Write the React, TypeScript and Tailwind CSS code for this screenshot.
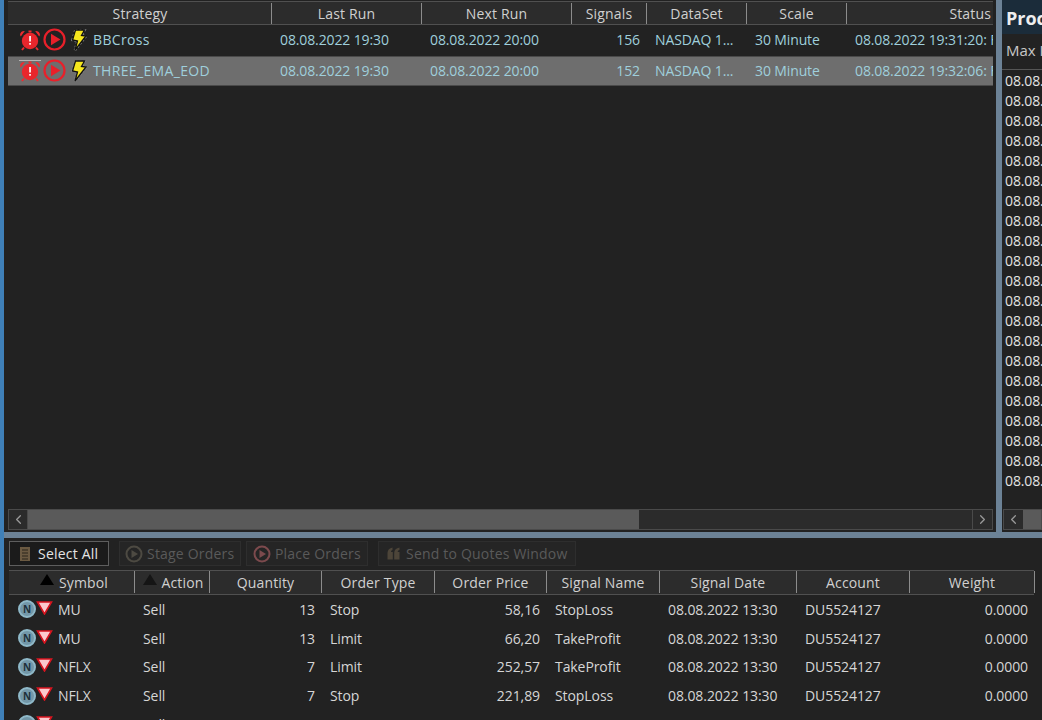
import { ChevronLeft, ChevronRight } from "lucide-react"

const strategies = [
  { name: "BBCross", last: "08.08.2022 19:30", next: "08.08.2022 20:00", signals: "156", status: "08.08.2022 19:31:20: F" },
  { name: "THREE_EMA_EOD", last: "08.08.2022 19:30", next: "08.08.2022 20:00", signals: "152", status: "08.08.2022 19:32:06: F" },
]

const orders = [
  ["MU", "Stop", "13", "58,16", "StopLoss"],
  ["MU", "Limit", "13", "66,20", "TakeProfit"],
  ["NFLX", "Limit", "7", "252,57", "TakeProfit"],
  ["NFLX", "Stop", "7", "221,89", "StopLoss"],
  ["NTES", "Stop", "9", "85,47", "StopLoss"],
]

function Alarm({ line }: { line?: boolean }) {
  return (
    <svg width="22" height="22" viewBox="0 0 22 22" className="shrink-0">
      <path d="M1 6 C1 3.5 3 1.8 5.8 2 L1.8 7.5 Z M21 6 C21 3.5 19 1.8 16.2 2 L20.2 7.5 Z" fill="#ee2a2f" />
      <rect x="9.5" y="1.5" width="3" height="2" fill="#ee2a2f" />
      <circle cx="11" cy="12" r="8.2" fill="#e8262c" />
      <path d="M5 18.5 L3 21 M17 18.5 L19 21" stroke="#ee2a2f" strokeWidth="2" />
      <rect x="10.2" y="7" width="1.7" height="5.5" fill="#fff" />
      <rect x="10.2" y="14" width="1.7" height="1.7" fill="#fff" />
      {line && <path d="M0 0.5 H22" stroke="#b5b5b5" strokeWidth="1" />}
    </svg>
  )
}

function Play() {
  return (
    <svg width="23" height="23" viewBox="0 0 23 23" className="shrink-0">
      <circle cx="11.5" cy="11.5" r="10" fill="none" stroke="#e8202a" strokeWidth="2.2" />
      <path d="M8 5.8 L17.5 11.5 L8 17.2 Z" fill="#e8202a" />
    </svg>
  )
}

function Bolt() {
  return (
    <svg width="16" height="22" viewBox="0 0 16 22" className="shrink-0">
      <path d="M4.5 1 L13.5 1 L10.5 6.5 L15 7 L4 21 L6.5 12 L1.5 11 Z" fill="none" stroke="#8a8a8a" strokeWidth="2.6" strokeDasharray="2 2" />
      <path d="M4.5 1 L13.5 1 L10.5 6.5 L15 7 L4 21 L6.5 12 L1.5 11 Z" fill="#f6e71d" stroke="#111" strokeWidth="1.3" />
    </svg>
  )
}

function SmallPlay({ color }: { color: string }) {
  return (
    <svg width="18" height="18" viewBox="0 0 18 18" className="shrink-0">
      <circle cx="9" cy="9" r="7.5" fill="none" stroke={color} strokeWidth="2" />
      <path d="M6.5 5 L13 9 L6.5 13 Z" fill={color} />
    </svg>
  )
}

function StatusIcons() {
  return (
    <div className="flex w-[40px] shrink-0 items-center">
      <div className="flex h-[18px] w-[18px] shrink-0 items-center justify-center rounded-full border-2 border-[#8fb9c9] bg-[#7397a8] text-[10px] font-bold leading-none text-[#20303a]">
        N
      </div>
      <svg width="17" height="14" viewBox="0 0 17 14" className="mb-[3px] shrink-0">
        <path d="M1.5 1 L15.5 1 L8.5 13 Z" fill="#fbc9cd" stroke="#d8141f" strokeWidth="1.6" />
      </svg>
    </div>
  )
}

function ScrollBar({ thumb, children }: { thumb: string; children?: React.ReactNode }) {
  return (
    <div className="flex h-[21px] shrink-0 border border-[#4a4a4a] bg-[#2b2b2b] text-[#9a9a9a]">
      {children}
      <div className={thumb} />
    </div>
  )
}

function Head({ w, children, sort }: { w: string; children: string; sort?: string }) {
  return (
    <div className={`${w} flex shrink-0 items-center justify-center border-r border-[#8c8c8c]`}>
      {sort && <span className={`mr-[5px] mb-[5px] h-0 w-0 border-x-[7px] border-b-[11px] border-x-transparent ${sort}`} />}
      {children}
    </div>
  )
}

export default function App() {
  return (
    <div className="flex h-[720px] w-[1042px] flex-col overflow-hidden bg-[#222222] pl-[4px] font-['Open_Sans',sans-serif] text-[14px] text-[#d8d8d8] shadow-[inset_4px_0_0_#3f80b8]">
      <div className="flex h-[532px] shrink-0">
        <div className="flex w-[992px] shrink-0 flex-col pl-[4px] pt-[1px]">
          <div className="flex h-[24px] w-[985px] shrink-0 border-y border-[#505050] bg-[#2c2c2c] pt-[1px] tracking-[0.15px] text-[#d0d0d0]">
            <Head w="w-[264px] pl-[1px]">Strategy</Head>
            <Head w="w-[150px]">Last Run</Head>
            <Head w="w-[150px]">Next Run</Head>
            <Head w="w-[75px]">Signals</Head>
            <Head w="w-[100px]">DataSet</Head>
            <Head w="w-[100px]">Scale</Head>
            <div className="flex flex-1 items-center justify-end pr-[2px]">Status</div>
          </div>
          <div className="flex-1">
            {strategies.map((s, i) => (
              <div
                key={s.name}
                className={`flex h-[30px] w-[985px] items-center overflow-hidden whitespace-nowrap pb-[1px] tracking-[-0.12px] text-[#9fcfdc] ${i === 1 ? "mt-[1px] border-y border-[#4a4a4a] bg-[#6e6e6e]" : ""}`}
              >
                <div className="flex w-[264px] shrink-0 items-center pl-[11px]">
                  <Alarm line={i === 1} />
                  <div className="ml-[2px] flex"><Play /></div>
                  <div className="ml-[5px] flex"><Bolt /></div>
                  <span className="ml-[6px] tracking-[0.35px]">{s.name}</span>
                </div>
                <div className="w-[150px] shrink-0 pl-[8px]">{s.last}</div>
                <div className="w-[150px] shrink-0 pl-[8px]">{s.next}</div>
                <div className="w-[75px] shrink-0 pr-[7px] text-right">{s.signals}</div>
                <div className="w-[100px] shrink-0 pl-[8px]">NASDAQ 1...</div>
                <div className="w-[100px] shrink-0 pl-[8px]">30 Minute</div>
                <div className="w-[146px] shrink-0 overflow-hidden pl-[8px]">{s.status}</div>
              </div>
            ))}
          </div>
          <div className="mb-[2px] w-[985px]">
            <ScrollBar thumb="order-2 w-[334px] bg-[#2b2b2b]">
              <div className="flex w-[19px] shrink-0 items-center justify-center border-r border-[#4a4a4a]">
                <ChevronLeft size={15} />
              </div>
              <div className="w-[612px] bg-[#5a5a5a]" />
              <div className="order-3 ml-auto flex w-[20px] shrink-0 items-center justify-center border-l border-[#4a4a4a]">
                <ChevronRight size={15} />
              </div>
            </ScrollBar>
          </div>
        </div>
        <div className="w-[6px] shrink-0 bg-[#6c8296]" />
        <div className="flex min-w-0 flex-1 flex-col overflow-hidden whitespace-nowrap">
          <div className="flex h-[34px] shrink-0 items-center bg-[#1b2c3a] pl-[4px] pt-[2px] text-[18px] font-bold text-[#eeeeee]">Proc</div>
          <div className="flex h-[36px] shrink-0 items-center border-b border-[#555555] pb-[3px] pl-[4px] text-[15px] text-[#c8c8c8]">Max I</div>
          <div className="flex-1 pl-[3px] pt-[1px] leading-[20px] tracking-[-0.12px] text-[#e4e4e4]">
            {Array.from({ length: 21 }, (_, i) => (
              <div key={i} className="h-[20px]">08.08.</div>
            ))}
          </div>
          <div className="mb-[2px] ml-[1px]">
            <ScrollBar thumb="flex-1 bg-[#5a5a5a]">
              <div className="flex w-[19px] shrink-0 items-center justify-center bg-[#2b2b2b]">
                <ChevronLeft size={15} />
              </div>
            </ScrollBar>
          </div>
        </div>
      </div>

      <div className="h-[6px] shrink-0 bg-[#6c8296]" />

      <div className="flex h-[32px] shrink-0 items-start gap-[10px] pl-[5px] pt-[3px] tracking-[0.2px]">
        <button className="flex h-[25px] w-[100px] items-center border border-[#5e5e5e] bg-[#1b1b1b] pl-[9px] text-[#e4e4e4]">
          <svg width="12" height="16" viewBox="0 0 12 16" className="mr-[7px] shrink-0">
            <rect x="1" y="1" width="10" height="14" fill="#6b5a42" />
            <path d="M3 4 H9 M3 7 H9 M3 10 H9 M3 13 H9" stroke="#2a241b" strokeWidth="1" />
          </svg>
          Select All
        </button>
        <button className="flex h-[25px] w-[122px] items-center gap-[4px] border border-[#2e2e2e] bg-[#252525] pl-[5px] text-[#5a5a5a]">
          <SmallPlay color="#4d4a42" />
          Stage Orders
        </button>
        <button className="-ml-[5px] flex h-[25px] w-[122px] items-center gap-[4px] border border-[#2e2e2e] bg-[#252525] pl-[6px] text-[#5a5a5a]">
          <SmallPlay color="#7c4a4d" />
          Place Orders
        </button>
        <button className="flex h-[25px] w-[198px] items-center gap-[6px] border border-[#2e2e2e] bg-[#252525] pl-[8px] text-[#5a5a5a]">
          <svg width="13" height="13" viewBox="0 0 13 13" className="shrink-0">
            <path d="M0.5 12.5 V6 C0.5 3 2.5 1 5.5 0.5 V3 C4.5 3.3 4 4 4 5 H5.8 V12.5 Z M7.2 12.5 V6 C7.2 3 9.2 1 12.5 0.5 V3 C11.2 3.3 10.7 4 10.7 5 H12.5 V12.5 Z" fill="#4d4539" />
          </svg>
          Send to Quotes Window
        </button>
      </div>

      <div className="ml-[5px] flex h-[25px] w-[1025px] shrink-0 border-y border-[#505050] bg-[#2c2c2c] pb-[1px] tracking-[0.15px] text-[#d0d0d0]">
        <Head w="w-[126px] pl-[5px]" sort="border-b-black">Symbol</Head>
        <Head w="w-[75px] pl-[2px]" sort="border-b-[#151515]">Action</Head>
        <Head w="w-[112px]">Quantity</Head>
        <Head w="w-[113px]">Order Type</Head>
        <Head w="w-[112px]">Order Price</Head>
        <Head w="w-[113px]">Signal Name</Head>
        <Head w="w-[137px]">Signal Date</Head>
        <Head w="w-[113px]">Account</Head>
        <Head w="w-[125px]">Weight</Head>
      </div>
      <div className="ml-[5px]">
        {orders.map(([symbol, type, qty, price, signal], i) => (
          <div key={i} className="flex h-[28.75px] items-center whitespace-nowrap tracking-[-0.08px] text-[#d6d6d6]">
            <div className="flex w-[126px] shrink-0 items-center pl-[9px]">
              <StatusIcons />
              <span>{symbol}</span>
            </div>
            <div className="w-[75px] shrink-0 pl-[8px]">Sell</div>
            <div className="w-[112px] shrink-0 pr-[7px] text-right">{qty}</div>
            <div className="w-[113px] shrink-0 pl-[8px]">{type}</div>
            <div className="w-[112px] shrink-0 pr-[7px] text-right">{price}</div>
            <div className="w-[113px] shrink-0 pl-[8px]">{signal}</div>
            <div className="w-[137px] shrink-0 pl-[8px]">08.08.2022 13:30</div>
            <div className="w-[113px] shrink-0 pl-[8px]">DU5524127</div>
            <div className="w-[125px] shrink-0 pr-[7px] text-right">0.0000</div>
          </div>
        ))}
      </div>
    </div>
  )
}
